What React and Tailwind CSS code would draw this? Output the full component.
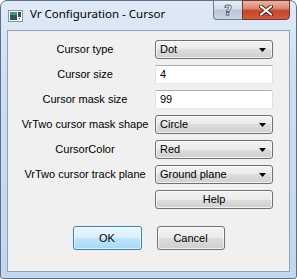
import React from "react";

const font = { fontFamily: '"Liberation Sans", Arial, sans-serif' };

function Arrow() {
  return (
    <svg width="7" height="4" viewBox="0 0 7 4" className="block">
      <path d="M0 0 H7 L3.5 4 Z" fill="#000" />
    </svg>
  );
}

function Combo({ value }) {
  return (
    <div className="h-[19px] rounded-[3px] border border-[#707070] bg-[linear-gradient(#f2f2f2_0%,#ebebeb_50%,#dddddd_50%,#cfcfcf_100%)] flex items-center pl-[4px] pr-[6px] shadow-[inset_0_0_0_1px_rgba(255,255,255,0.7)]">
      <span className="flex-1 text-[11px] text-black leading-none">{value}</span>
      <Arrow />
    </div>
  );
}

function Edit({ value }) {
  return (
    <div className="h-[19px] rounded-[2px] border border-[#dbdfe6] border-t-[#abadb3] border-b-[#e3e9ef] bg-white flex items-center pl-[4px]">
      <span className="text-[11px] text-black leading-none">{value}</span>
    </div>
  );
}

function Label({ children }) {
  return (
    <div className="h-[19px] flex items-center justify-center text-[11px] text-black whitespace-nowrap">
      {children}
    </div>
  );
}

export default function App() {
  return (
    <div
      className="w-[297px] h-[279px] rounded-t-[7px] rounded-b-[3px] border border-[#5c7189] bg-[linear-gradient(#dfeaf6_0%,#cddef1_30%,#c2d7ee_100%)] flex flex-col"
      style={font}
    >
      {/* title bar */}
      <div className="h-[29px] flex items-start">
        <div className="ml-[7px] mt-[9px]">
          <svg width="15" height="12" viewBox="0 0 15 12" className="block">
            <rect x="0.5" y="0.5" width="14" height="11" fill="#f4f6f8" stroke="#8a96a3" />
            <rect x="2" y="2" width="7" height="8" fill="#2d5a55" />
            <rect x="2" y="2" width="7" height="3" fill="#4f8c86" />
            <rect x="10" y="2" width="3" height="5" fill="#3b4a56" />
            <rect x="11" y="8" width="1" height="1" fill="#3b4a56" />
          </svg>
        </div>
        <div className="ml-[7px] mt-[7px] text-[11.5px] text-black leading-none" style={{ fontFamily: '"Noto Sans", "Open Sans", sans-serif' }}>
          Vr Configuration - Cursor
        </div>
        <div className="ml-auto mr-[6px] -mt-[1px] flex">
          <div className="w-[29px] h-[20px] rounded-bl-[4px] border border-[#6b7d93] border-r-0 bg-[linear-gradient(#e6edf5_0%,#d3dde9_45%,#b9c8da_50%,#c6d4e4_100%)] flex items-center justify-center">
            <span className="text-[14px] font-bold text-white leading-none" style={{ fontFamily: '"DejaVu Sans", sans-serif', WebkitTextStroke: "0.8px #4a5868" }}>?</span>
          </div>
          <div className="w-[48px] h-[20px] rounded-br-[4px] border border-[#6b3a32] bg-[linear-gradient(#eab4a6_0%,#dd8a74_40%,#c7442b_55%,#d35a3e_100%)] flex items-center justify-center">
            <svg width="14" height="11" viewBox="0 0 14 11" className="block">
              <path d="M2 1.5 L12 9.5 M12 1.5 L2 9.5" stroke="#4a2018" strokeWidth="4" strokeLinecap="round" />
              <path d="M2 1.5 L12 9.5 M12 1.5 L2 9.5" stroke="#fff" strokeWidth="2.2" strokeLinecap="round" />
            </svg>
          </div>
        </div>
      </div>

      {/* client area */}
      <div className="mx-[6px] h-[242px] border border-[#8da2bb] bg-[#f0f0f0] pt-[9px] pl-[12px] pr-[15px] flex flex-col">
        <div className="grid grid-cols-[130px_118px] gap-x-[5px] gap-y-[6px]">
          <Label>Cursor type</Label>
          <Combo value="Dot" />
          <Label>Cursor size</Label>
          <Edit value="4" />
          <Label>Cursor mask size</Label>
          <Edit value="99" />
          <Label>VrTwo cursor mask shape</Label>
          <Combo value="Circle" />
          <Label>CursorColor</Label>
          <Combo value="Red" />
          <Label>VrTwo cursor track plane</Label>
          <Combo value="Ground plane" />
          <div />
          <div className="h-[19px] rounded-[3px] border border-[#707070] bg-[linear-gradient(#f2f2f2_0%,#ebebeb_50%,#dddddd_50%,#cfcfcf_100%)] flex items-center justify-center text-[11px] text-black shadow-[inset_0_0_0_1px_rgba(255,255,255,0.7)]">
            Help
          </div>
        </div>
        <div className="mt-[17px] -ml-[12px] -mr-[15px] flex justify-center gap-[15px]">
          <div className="w-[69px] h-[24px] rounded-[3px] border border-[#3c7fb1] bg-[linear-gradient(#eaf6fd_0%,#d9f0fc_50%,#bee6fd_50%,#a7d9f5_100%)] flex items-center justify-center text-[11px] text-black shadow-[inset_0_0_0_1px_rgba(255,255,255,0.6)]">
            OK
          </div>
          <div className="w-[68px] h-[24px] rounded-[3px] border border-[#707070] bg-[linear-gradient(#f2f2f2_0%,#ebebeb_50%,#dddddd_50%,#cfcfcf_100%)] flex items-center justify-center text-[11px] text-black shadow-[inset_0_0_0_1px_rgba(255,255,255,0.7)]">
            Cancel
          </div>
        </div>
      </div>
    </div>
  );
}
